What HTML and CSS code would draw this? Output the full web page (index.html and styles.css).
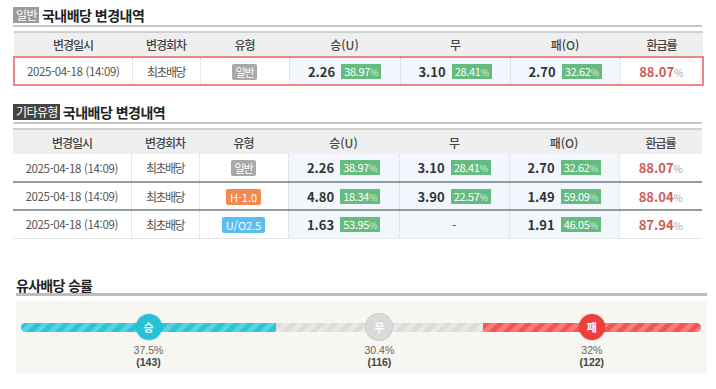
FILE: index.html
```html
<!DOCTYPE html>
<html lang="ko">
<head>
<meta charset="utf-8">
<link rel="stylesheet" href="styles.css">
</head>
<body>
<div class="section">
  <div class="title"><span class="tag">일반</span>국내배당 변경내역</div>
  <div class="rule"></div>
  <table>
    <colgroup><col class="c1"><col class="c2"><col class="c3"><col class="c4"><col class="c5"><col class="c6"><col class="c7"></colgroup>
    <thead><tr><th>변경일시</th><th>변경회차</th><th>유형</th><th class="lat">승(U)</th><th>무</th><th class="lat">패(O)</th><th>환급률</th></tr></thead>
    <tbody>
      <tr class="hl">
        <td class="dt">2025-04-18 (14:09)</td><td class="kr">최초배당</td><td><span class="type gray">일반</span></td>
        <td class="odd"><div class="oc"><span class="ov">2.26</span><span class="pct">38.97<small>%</small></span></div></td>
        <td class="odd"><div class="oc"><span class="ov">3.10</span><span class="pct">28.41<small>%</small></span></div></td>
        <td class="odd"><div class="oc"><span class="ov">2.70</span><span class="pct">32.62<small>%</small></span></div></td>
        <td><span class="rate">88.07<small>%</small></span></td>
      </tr>
    </tbody>
  </table>
</div>

<div class="section second">
  <div class="title"><span class="tag dark">기타유형</span>국내배당 변경내역</div>
  <div class="rule"></div>
  <table>
    <colgroup><col class="c1"><col class="c2"><col class="c3"><col class="c4"><col class="c5"><col class="c6"><col class="c7"></colgroup>
    <thead><tr><th>변경일시</th><th>변경회차</th><th>유형</th><th class="lat">승(U)</th><th>무</th><th class="lat">패(O)</th><th>환급률</th></tr></thead>
    <tbody>
      <tr class="sep">
        <td class="dt">2025-04-18 (14:09)</td><td class="kr">최초배당</td><td><span class="type gray">일반</span></td>
        <td class="odd"><div class="oc"><span class="ov">2.26</span><span class="pct">38.97<small>%</small></span></div></td>
        <td class="odd"><div class="oc"><span class="ov">3.10</span><span class="pct">28.41<small>%</small></span></div></td>
        <td class="odd"><div class="oc"><span class="ov">2.70</span><span class="pct">32.62<small>%</small></span></div></td>
        <td><span class="rate">88.07<small>%</small></span></td>
      </tr>
      <tr class="sep">
        <td class="dt">2025-04-18 (14:09)</td><td class="kr">최초배당</td><td><span class="type orange">H-1.0</span></td>
        <td class="odd"><div class="oc"><span class="ov">4.80</span><span class="pct">18.34<small>%</small></span></div></td>
        <td class="odd"><div class="oc"><span class="ov">3.90</span><span class="pct">22.57<small>%</small></span></div></td>
        <td class="odd"><div class="oc"><span class="ov">1.49</span><span class="pct">59.09<small>%</small></span></div></td>
        <td><span class="rate">88.04<small>%</small></span></td>
      </tr>
      <tr class="last">
        <td class="dt">2025-04-18 (14:09)</td><td class="kr">최초배당</td><td><span class="type blue">U/O2.5</span></td>
        <td class="odd"><div class="oc"><span class="ov">1.63</span><span class="pct">53.95<small>%</small></span></div></td>
        <td class="odd"><div class="oc"><span class="dash">-</span></div></td>
        <td class="odd"><div class="oc"><span class="ov">1.91</span><span class="pct">46.05<small>%</small></span></div></td>
        <td><span class="rate">87.94<small>%</small></span></td>
      </tr>
    </tbody>
  </table>
</div>

<div class="sim">
  <div class="sim-title">유사배당 승률</div>
  <div class="panel">
    <div class="bar">
      <div class="seg win" style="flex-grow:37.5">
        <div class="fill"></div>
        <span class="mark">승</span>
        <div class="lbl">37.5%</div>
        <div class="cnt">(143)</div>
      </div>
      <div class="seg draw" style="flex-grow:30.4">
        <div class="fill"></div>
        <span class="mark">무</span>
        <div class="lbl">30.4%</div>
        <div class="cnt">(116)</div>
      </div>
      <div class="seg lose" style="flex-grow:32.1">
        <div class="fill"></div>
        <span class="mark">패</span>
        <div class="lbl">32%</div>
        <div class="cnt">(122)</div>
      </div>
    </div>
  </div>
</div>
</body>
</html>
```

FILE: styles.css
```css
* { box-sizing: border-box; margin: 0; padding: 0; }

body {
  font-family: "Noto Sans CJK KR", "Noto Sans", sans-serif;
  color: #555;
  background: #fff;
  width: 716px;
  padding: 7px 0 0 13px;
}

.section { width: 689px; }
.section.second { margin-top: 18px; }

.title {
  display: flex;
  align-items: center;
  gap: 3px;
  height: 16px;
  line-height: 16px;
  font-size: 14px;
  font-weight: 700;
  color: #222;
  letter-spacing: -0.5px;
}

.tag {
  display: inline-block;
  height: 16px;
  line-height: 16px;
  padding: 0 2px 0 3px;
  font-size: 12px;
  font-weight: 400;
  color: #fff;
  background: #9b9b9b;
  letter-spacing: -0.6px;
}
.tag.dark { background: #444; }

.rule {
  height: 2px;
  margin-top: 2px;
  background: #c8c8c8;
}

table {
  width: 689px;
  margin-top: 4px;
  border-collapse: collapse;
  table-layout: fixed;
  border-top: 2px solid #cfcfcf;
}

.c1 { width: 118px; }
.c2 { width: 68px; }
.c3 { width: 89px; }
.c4 { width: 111px; }
.c5 { width: 110px; }
.c6 { width: 110px; }
.c7 { width: 83px; }

th {
  height: 25px;
  background: #efefef;
  font-size: 12px;
  font-weight: 500;
  color: #444;
  letter-spacing: -1px;
}
th.lat { letter-spacing: 0; }

td {
  height: 28px;
  font-size: 12px;
  text-align: center;
  color: #555;
  border-left: 1px dotted #d2d2d2;
  padding: 0;
}
td:first-child { border-left: none; }
td.kr { letter-spacing: -1.5px; }
td.dt { font-size: 11.5px; letter-spacing: -0.35px; }

.hl td {
  border-top: 2px solid #ee8484;
  border-bottom: 2px solid #ee8484;
}
.hl td:first-child { border-left: 2px solid #ee8484; }
.hl td:last-child { border-right: 2px solid #ee8484; }

.sep td { border-bottom: 2px solid #8e9e9e; }
.last td { border-bottom: 1px solid #e6e6e6; }

.odd { background: #f2f7fd; }

.oc {
  display: flex;
  align-items: center;
  justify-content: center;
  gap: 6px;
}

.ov {
  font-size: 13px;
  font-weight: 700;
  color: #333;
}

.dash { font-size: 12px; color: #444; }

.pct {
  display: inline-block;
  min-width: 40px;
  height: 15px;
  line-height: 15px;
  padding: 0 2px;
  font-size: 11px;
  color: #fff;
  background: #66bc7f;
  text-align: center;
  letter-spacing: -0.3px;
}
.pct small { font-size: 9px; color: rgba(255,255,255,0.75); }

.type {
  display: inline-block;
  height: 16px;
  line-height: 16px;
  padding: 0 4px;
  font-size: 11px;
  color: #fff;
  border-radius: 2px;
}
.type.gray { background: #a9a9a9; letter-spacing: -1px; padding: 0 3px; }
.type.orange { background: #f3894e; }
.type.blue { background: #5cbdf0; }

.rate {
  font-size: 13px;
  font-weight: 600;
  color: #cc5c5c;
}
.rate small { font-size: 10px; font-weight: 400; color: #a8a8a8; }

/* similar odds */
.sim {
  width: 691px;
  margin: 38px 0 0 3px;
}

.sim-title {
  height: 19px;
  line-height: 16px;
  font-size: 14px;
  font-weight: 700;
  color: #222;
  letter-spacing: -0.7px;
  border-bottom: 3px solid #bdbdbd;
}

.panel {
  margin-top: 5px;
  height: 73px;
  padding: 22px 6px 0 5px;
  background: #f7f6f0;
}

.bar { display: flex; }

.seg {
  position: relative;
  flex-basis: 0;
  display: flex;
  flex-direction: column;
  align-items: center;
}

.fill { width: 100%; height: 9px; }

.win .fill {
  border-radius: 5px 0 0 5px;
  background: repeating-linear-gradient(135deg, #2ec4d7 0 5px, #5ad2e1 5px 10px);
}
.draw .fill {
  background: repeating-linear-gradient(135deg, #dcdcdc 0 5px, #e7e7e7 5px 10px);
}
.lose .fill {
  border-radius: 0 5px 5px 0;
  background: repeating-linear-gradient(135deg, #f45656 0 5px, #f77c7c 5px 10px);
}

.mark {
  position: absolute;
  top: -8.5px;
  left: 50%;
  transform: translateX(-50%);
  width: 26px;
  height: 26px;
  border-radius: 50%;
  font-size: 11px;
  font-weight: 700;
  line-height: 26px;
  text-align: center;
  color: #fff;
}
.win .mark { background: #26c1d5; box-shadow: 0 0 0 1px rgba(0,120,140,0.12); }
.draw .mark { background: #dadada; box-shadow: 0 0 0 1px #cdcdcd; }
.lose .mark { background: #ee3f3f; box-shadow: 0 0 0 1px rgba(160,0,0,0.12); }

.lbl {
  margin-top: 12px;
  font-family: "Liberation Sans", Arial, sans-serif;
  font-size: 10.5px;
  line-height: 12px;
  color: #666;
}
.cnt {
  font-family: "Liberation Sans", Arial, sans-serif;
  font-size: 10.5px;
  line-height: 12px;
  font-weight: 700;
  color: #444;
}
```
